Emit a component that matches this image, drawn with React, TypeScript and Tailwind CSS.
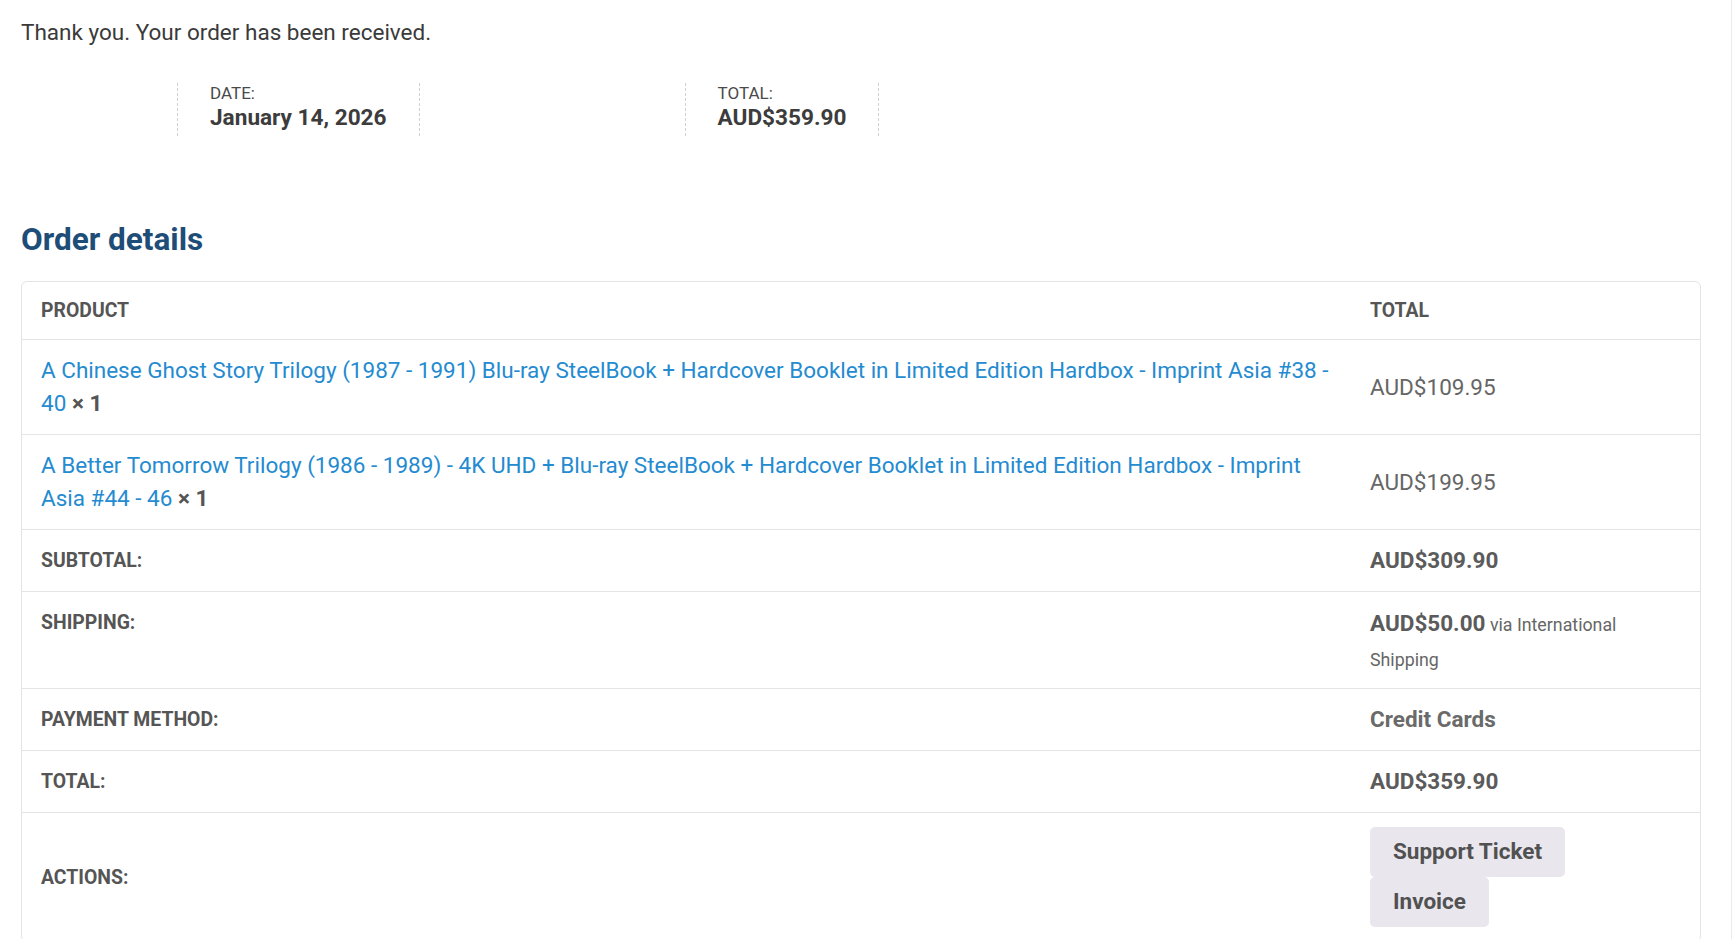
import React from "react";

const products = [
  {
    name: "A Chinese Ghost Story Trilogy (1987 - 1991) Blu-ray SteelBook + Hardcover Booklet in Limited Edition Hardbox - Imprint Asia #38 - 40",
    qty: 1,
    total: "AUD$109.95",
  },
  {
    name: "A Better Tomorrow Trilogy (1986 - 1989) - 4K UHD + Blu-ray SteelBook + Hardcover Booklet in Limited Edition Hardbox - Imprint Asia #44 - 46",
    qty: 1,
    total: "AUD$199.95",
  },
];

function Label({ children }: { children: React.ReactNode }) {
  return (
    <div className="px-[19px] py-[14px] text-[19.4px] leading-[33px] font-bold uppercase text-[#555]">
      {children}
    </div>
  );
}

function App() {
  return (
    <div className="min-h-screen w-full bg-white border-r border-[#ececec] pl-[21px] pt-[16px] font-['Roboto',sans-serif] overflow-hidden">
      <p className="text-[22.5px] leading-[33px] text-[#3a3a3a]">
        Thank you. Your order has been received.
      </p>

      <ul className="mt-[34px] ml-[156px] flex h-[53px]">
        <li className="border-x border-dashed border-[#d0d0d0] px-[32px]">
          <div className="text-[17px] leading-[20px] uppercase text-[#4a4a4a]">Date:</div>
          <div className="text-[22.6px] leading-[30px] font-bold text-[#3c3c3c]">January 14, 2026</div>
        </li>
        <li className="ml-[265px] border-x border-dashed border-[#d0d0d0] px-[32px]">
          <div className="text-[17px] leading-[20px] uppercase text-[#4a4a4a]">Total:</div>
          <div className="text-[22.6px] leading-[30px] font-bold text-[#3c3c3c]">AUD$359.90</div>
        </li>
      </ul>

      <h2 className="mt-[86px] text-[31.5px] leading-[36px] font-bold text-[#1e4d78]">Order details</h2>

      <div className="mt-[23px] w-[1680px] rounded-[6px] border border-[#e4e4e4]">
        <div className="grid grid-cols-[1329px_1fr]">
          <div className="px-[19px] py-[14px] text-[19.4px] leading-[29px] font-bold uppercase text-[#555]">Product</div>
          <div className="px-[19px] py-[14px] text-[19.4px] leading-[29px] font-bold uppercase text-[#555]">Total</div>
        </div>

        {products.map((p) => (
          <div key={p.name} className="grid grid-cols-[1329px_1fr] border-t border-[#e4e4e4]">
            <div className="px-[19px] py-[14px] text-[22.5px] leading-[33px]">
              <a href="#" className="text-[#258bd0]">{p.name}</a>
              <strong className="text-[#555]"> × {p.qty}</strong>
            </div>
            <div className="flex items-center px-[19px] py-[14px] text-[22.5px] leading-[33px] text-[#666]">
              {p.total}
            </div>
          </div>
        ))}

        <div className="grid grid-cols-[1329px_1fr] border-t border-[#e4e4e4]">
          <Label>Subtotal:</Label>
          <div className="px-[19px] py-[14px] text-[22.5px] leading-[33px] font-bold text-[#5b5b5b]">AUD$309.90</div>
        </div>

        <div className="grid grid-cols-[1329px_1fr] border-t border-[#e4e4e4]">
          <Label>Shipping:</Label>
          <div className="px-[19px] pt-[14px] pb-[12px] text-[22.5px] leading-[35px] text-[#5b5b5b]">
            <span className="font-bold">AUD$50.00</span>
            <small className="text-[17.8px] leading-none text-[#666]"> via International Shipping</small>
          </div>
        </div>

        <div className="grid grid-cols-[1329px_1fr] border-t border-[#e4e4e4]">
          <Label>Payment method:</Label>
          <div className="px-[19px] py-[14px] text-[22.5px] leading-[33px] font-bold text-[#6a6a6a]">Credit Cards</div>
        </div>

        <div className="grid grid-cols-[1329px_1fr] border-t border-[#e4e4e4]">
          <Label>Total:</Label>
          <div className="px-[19px] py-[14px] text-[22.5px] leading-[33px] font-bold text-[#5b5b5b]">AUD$359.90</div>
        </div>

        <div className="grid grid-cols-[1329px_1fr] border-t border-[#e4e4e4]">
          <div className="flex items-center">
            <Label>Actions:</Label>
          </div>
          <div className="flex flex-col items-start px-[19px] py-[14px]">
            <a href="#" className="flex h-[50px] items-center rounded-[5px] bg-[#e9e6ed] px-[23px] text-[22.5px] font-bold text-[#515151]">
              Support Ticket
            </a>
            <a href="#" className="flex h-[50px] items-center rounded-[5px] bg-[#e9e6ed] px-[23px] text-[22.5px] font-bold text-[#515151]">
              Invoice
            </a>
          </div>
        </div>
      </div>
    </div>
  );
}

export default App;
